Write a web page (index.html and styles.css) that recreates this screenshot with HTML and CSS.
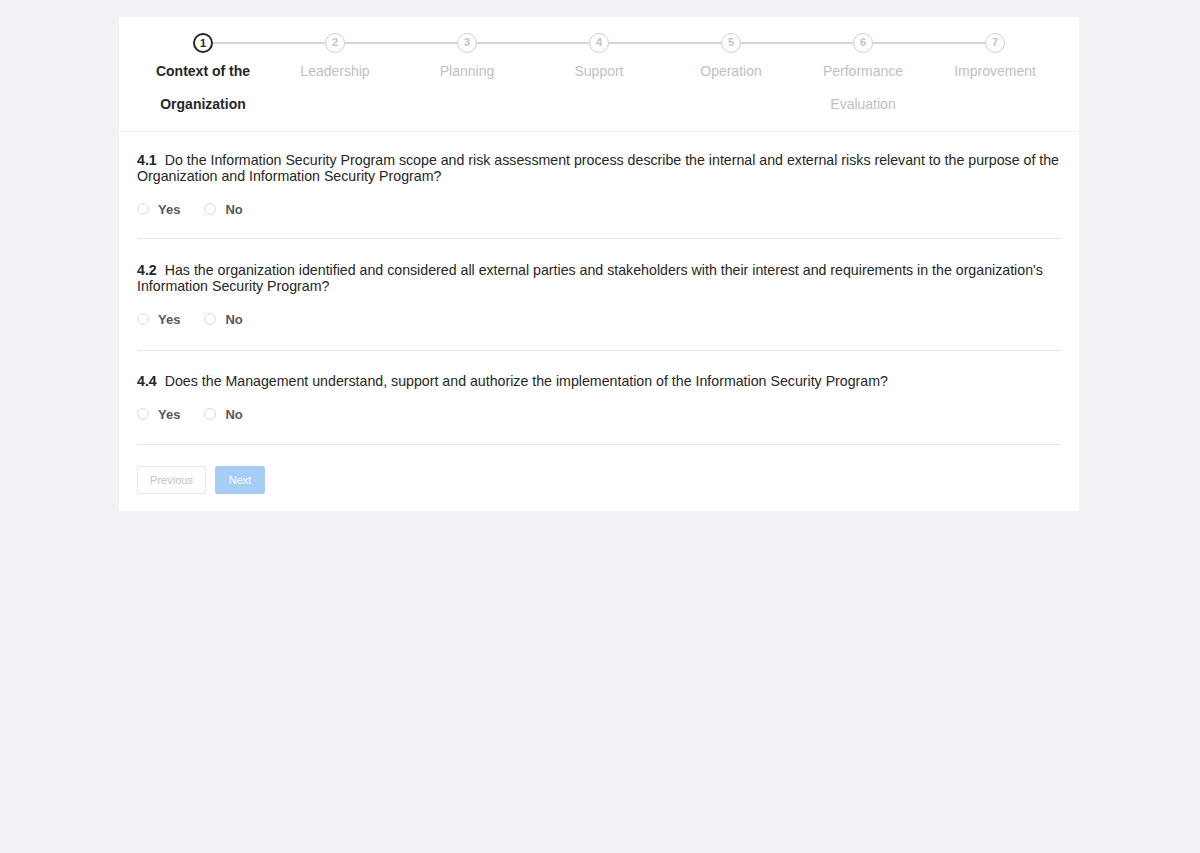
FILE: index.html
```html
<!DOCTYPE html>
<html>
<head>
<meta charset="utf-8">
<link rel="stylesheet" href="styles.css">
</head>
<body>
<div class="page">
  <div class="card">
    <div class="steps">
      <div class="step active"><span class="dot">1</span><span class="label">Context of the Organization</span></div>
      <div class="step"><span class="dot">2</span><span class="label">Leadership</span></div>
      <div class="step"><span class="dot">3</span><span class="label">Planning</span></div>
      <div class="step"><span class="dot">4</span><span class="label">Support</span></div>
      <div class="step"><span class="dot">5</span><span class="label">Operation</span></div>
      <div class="step"><span class="dot">6</span><span class="label">Performance Evaluation</span></div>
      <div class="step last"><span class="dot">7</span><span class="label">Improvement</span></div>
    </div>
    <div class="body">
      <div class="question q1">
        <p class="qtext"><span class="qnum">4.1</span><span>Do the Information Security Program scope and risk assessment process describe the internal and external risks relevant to the purpose of the</span><br><span>Organization and Information Security Program?</span></p>
        <div class="options">
          <label class="opt"><span class="radio"></span>Yes</label>
          <label class="opt"><span class="radio"></span>No</label>
        </div>
      </div>
      <div class="question q2">
        <p class="qtext"><span class="qnum">4.2</span><span>Has the organization identified and considered all external parties and stakeholders with their interest and requirements in the organization's</span><br><span>Information Security Program?</span></p>
        <div class="options">
          <label class="opt"><span class="radio"></span>Yes</label>
          <label class="opt"><span class="radio"></span>No</label>
        </div>
      </div>
      <div class="question q3">
        <p class="qtext"><span class="qnum">4.4</span><span>Does the Management understand, support and authorize the implementation of the Information Security Program?</span></p>
        <div class="options">
          <label class="opt"><span class="radio"></span>Yes</label>
          <label class="opt"><span class="radio"></span>No</label>
        </div>
      </div>
      <div class="actions">
        <button class="btn btn-prev">Previous</button>
        <button class="btn btn-next">Next</button>
      </div>
    </div>
  </div>
</div>
</body>
</html>
```

FILE: styles.css
```css
html, body {
  margin: 0;
  padding: 0;
  background: #f0f2f5;
  font-family: "Liberation Sans", Arial, sans-serif;
  color: #262626;
}
.page {
  padding: 17px 0 0 119px;
  display: flex;
  min-height: 853px;
  box-sizing: border-box;
  align-items: flex-start;
}
.card {
  width: 960px;
  height: 494px;
  background: #fff;
  box-sizing: border-box;
}
.steps {
  display: grid;
  grid-template-columns: repeat(7, 132px);
  padding: 16px 18px 10px;
  border-bottom: 1px solid #f0f0f0;
}
.step {
  position: relative;
  display: flex;
  flex-direction: column;
  align-items: center;
  text-align: center;
}
.step::after {
  content: "";
  position: absolute;
  top: 9px;
  left: calc(50% + 10px);
  width: 112px;
  height: 2px;
  background: #d4d4d4;
}
.step.last::after { display: none; }
.dot {
  width: 20px;
  height: 20px;
  box-sizing: border-box;
  border: 1.5px solid #cfcfcf;
  border-radius: 50%;
  font-size: 11px;
  line-height: 17px;
  color: #c4c4c4;
  font-weight: bold;
}
.step.active .dot {
  border: 2px solid #262626;
  color: #262626;
  line-height: 16px;
}
.label {
  margin-top: 2px;
  font-size: 14px;
  line-height: 33px;
  color: #bfbfbf;
  width: 110px;
}
.step.active .label {
  color: #262626;
  font-weight: bold;
}
.body {
  padding: 0 18px;
}
.question {
  border-bottom: 1px solid #e8e8e8;
}
.q1 { padding: 20px 0 21px; }
.q2 { padding: 23px 0 23px; }
.q3 { padding: 22px 0 22px; }
.qtext {
  margin: 0;
  font-size: 14.2px;
  line-height: 16px;
  color: #262626;
}
.qnum {
  font-weight: bold;
  margin-right: 8px;
}
.options {
  margin-top: 17px;
  display: flex;
  gap: 24px;
  height: 16px;
  align-items: center;
}
.opt {
  display: flex;
  align-items: center;
  gap: 9px;
  font-size: 13px;
  font-weight: bold;
  color: #595959;
}
.radio {
  width: 12px;
  height: 12px;
  box-sizing: border-box;
  border: 1px solid #dcdcdc;
  border-radius: 50%;
}
.actions {
  display: flex;
  gap: 9px;
  padding-top: 21px;
}
.btn {
  height: 28px;
  font-family: inherit;
  font-size: 11px;
  border-radius: 2px;
  padding: 0 10px;
}
.btn-prev {
  background: #fff;
  border: 1px solid #e8e8e8;
  color: #bfbfbf;
  width: 69px;
}
.btn-next {
  background: #a6cdf7;
  border: 1px solid #a6cdf7;
  color: #fff;
  width: 50px;
}
```
